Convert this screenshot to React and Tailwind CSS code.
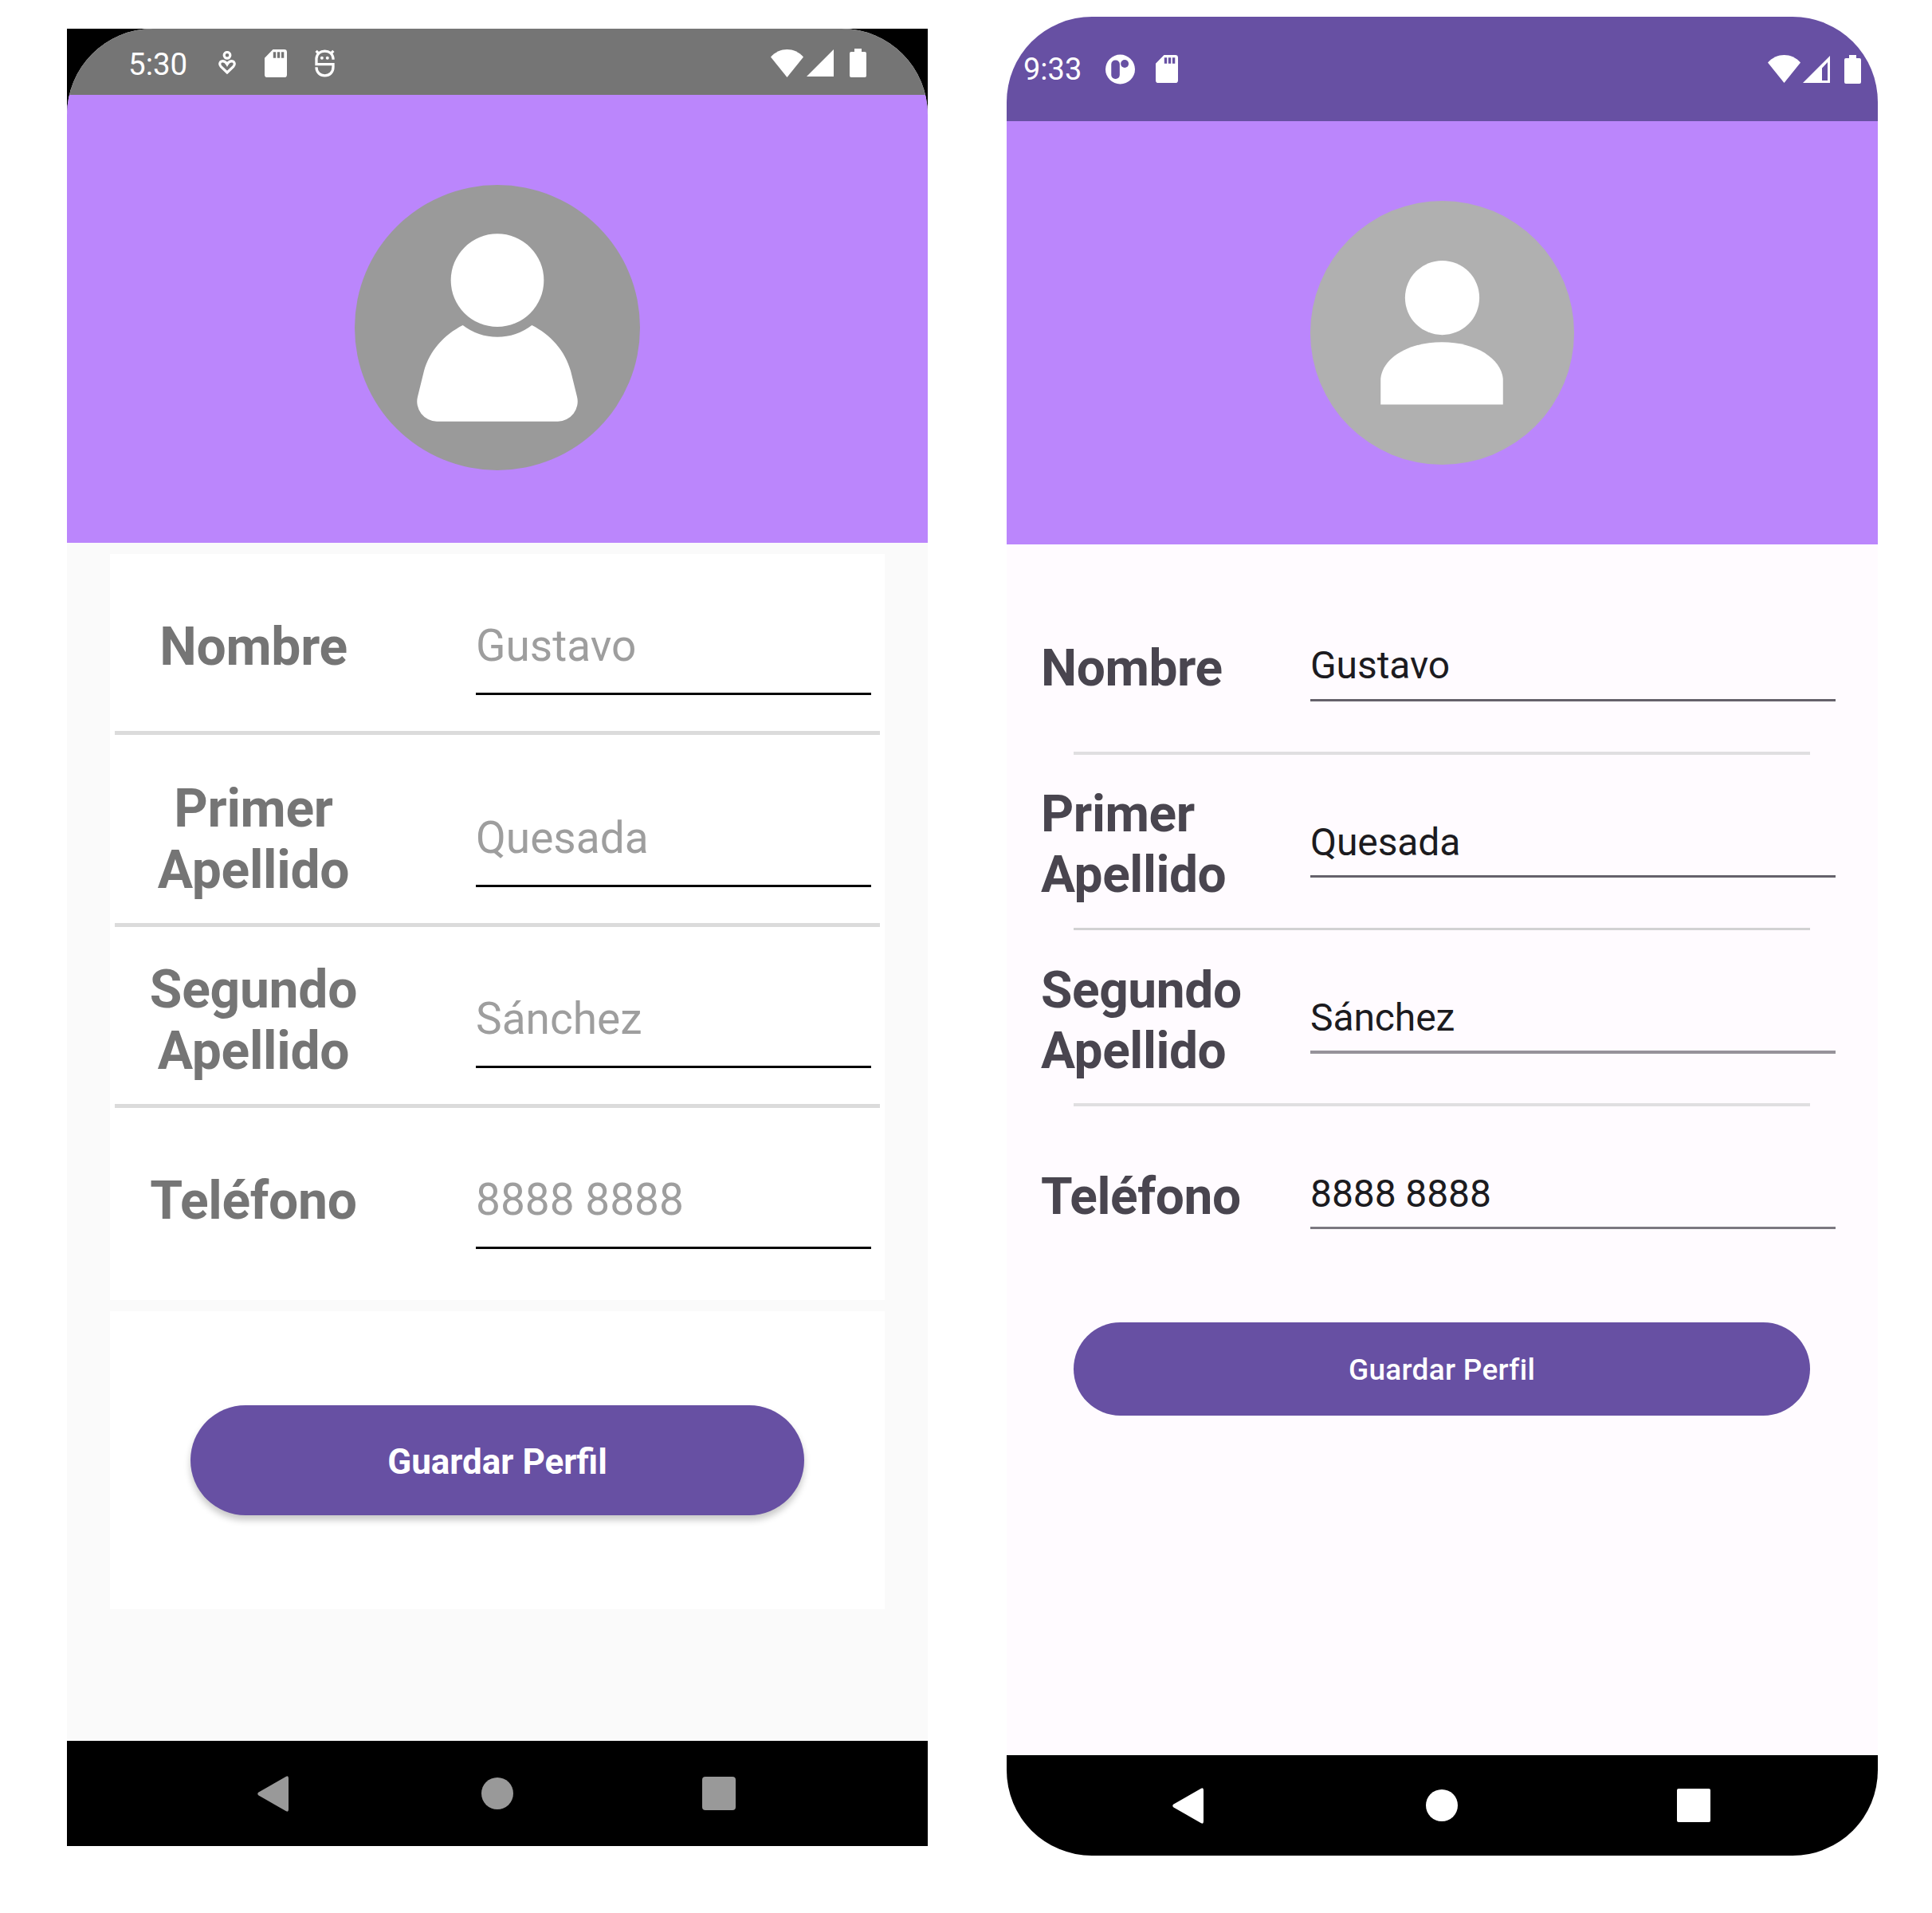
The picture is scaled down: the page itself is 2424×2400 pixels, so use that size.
import React from "react";

const SdCard = ({ className }) => (
  <svg viewBox="0 0 83 104" preserveAspectRatio="none" className={className}>
    <path
      fill="#fff"
      fillRule="evenodd"
      d="M31 0H73Q83 0 83 10V94Q83 104 73 104H10Q0 104 0 94V32ZM32 10V32H42V10ZM47 10V32H57V10ZM62 10V32H72V10Z"
    />
  </svg>
);

const Wifi = ({ className }) => (
  <svg viewBox="0 0 125 104" preserveAspectRatio="none" className={className}>
    <path fill="#fff" d="M0 28C35 -9 90 -9 125 28L62.5 104Z" />
  </svg>
);

const Battery = ({ className }) => (
  <svg viewBox="0 0 63 107" preserveAspectRatio="none" className={className}>
    <path fill="#fff" d="M18 0H45V12H57Q63 12 63 18V101Q63 107 57 107H6Q0 107 0 101V18Q0 12 6 12H18Z" />
  </svg>
);

const Heart = () => (
  <svg viewBox="0 0 66 90" className="ml-[37px] h-[30px] w-[22px]">
    <g fill="none" stroke="#fff" strokeWidth="9.5">
      <circle cx="33" cy="16" r="11.5" />
      <path d="M33 81L10 59C0 47 8 38 17 38Q27 39 33 50Q39 39 49 38C58 38 66 47 56 59Z" />
    </g>
  </svg>
);

const Droid = () => (
  <svg viewBox="0 0 76 105" className="ml-[35px] h-[35px] w-[25px]">
    <g fill="none" stroke="#fff" strokeWidth="10">
      <path d="M70 38V34C68 16 55 6 38 6S8 16 6 34V56H70V66C70 87 56 99 38 99S6 87 6 67" />
      <path d="M5 5L17 17M71 5L59 17" />
    </g>
    <circle cx="27" cy="32" r="6" fill="#fff" />
    <circle cx="48" cy="32" r="6" fill="#fff" />
  </svg>
);

const Nav = ({ className, fill, gapA, gapB, radius }) => (
  <div className={className}>
    <svg viewBox="0 0 39 45" className="h-[45px] w-[39px]" fill={fill}>
      <path d="M36 .8Q39 -.8 39 3V42Q39 45.8 36 44.2L1.5 24.5Q-1 22.5 1.5 20.5Z" />
    </svg>
    <div className={gapA} />
    <svg viewBox="0 0 40 40" className="h-[40px] w-[40px]" fill={fill}>
      <circle cx="20" cy="20" r="20" />
    </svg>
    <div className={gapB} />
    <svg viewBox="0 0 42 42" className="h-[42px] w-[42px]" fill={fill}>
      <rect width="42" height="42" rx={radius} />
    </svg>
  </div>
);

const leftRows = [
  { label: ["Nombre"], value: "Gustavo", row: "h-[222px] pt-[78px]", input: "mt-[5px]" },
  { label: ["Primer", "Apellido"], value: "Quesada", row: "h-[236px] pt-[54px]", input: "mt-[43px]" },
  { label: ["Segundo", "Apellido"], value: "Sánchez", row: "h-[222px] pt-[40px]", input: "mt-[43px]" },
  { label: ["Teléfono"], value: "8888 8888", row: "h-[241px] pt-[78px]", input: "mt-[5px]" },
];

const rightRows = [
  { label: ["Nombre"], value: "Gustavo", row: "h-[260px] pt-[118px]", input: "mt-[6px] h-[73px] border-b-3 border-[#65616b]", rule: "h-[4px] bg-[#e0dfe1]" },
  { label: ["Primer", "Apellido"], value: "Quesada", row: "h-[217px] pt-[37px]", input: "mt-[45px] h-[72px] border-b-3 border-[#65616b]", rule: "h-[3px] bg-[#d2d1d3]" },
  { label: ["Segundo", "Apellido"], value: "Sánchez", row: "h-[217px] pt-[38px]", input: "mt-[44px] h-[73px] border-b-4 border-[#96929a]", rule: "h-[4px] bg-[#e0dfe1]" },
  { label: ["Teléfono"], value: "8888 8888", row: "h-[271px] pt-[76px]", input: "mt-[6px] h-[72px] border-b-3 border-[#7b7780]", rule: null },
];

const LeftPhone = () => (
  <section className="mt-[36px] ml-[84px] h-[2280px] w-[1080px] shrink-0 bg-black">
    <div className="flex h-[2148px] flex-col overflow-hidden rounded-t-[108px] bg-[#fafafa]">
      <div className="flex h-[83px] shrink-0 items-center bg-[#757575] pt-[3px] pl-[77px] text-white">
        <span className="mt-[3px] w-[76px] text-[38.5px] leading-[45px]">5:30</span>
        <Heart />
        <SdCard className="ml-[36px] h-[35px] w-[28px]" />
        <Droid />
        <Wifi className="ml-[547px] h-[35px] w-[41px]" />
        <svg viewBox="0 0 34 34" className="ml-[4px] h-[34px] w-[34px]">
          <path fill="#fff" d="M34 0V34H0Z" />
        </svg>
        <Battery className="ml-[20px] h-[36px] w-[21px]" />
      </div>
      <div className="flex h-[562px] shrink-0 justify-center bg-[#bb86fc] pt-[113px]">
        <svg viewBox="45 65 1074 1074" className="h-[358px] w-[358px]">
          <circle cx="582" cy="602" r="537" fill="#9a9a9a" />
          <circle cx="582" cy="424" r="175" fill="#fff" />
          <path
            fill="#fff"
            d="M452 593A212 212 0 0 0 712 593C783 629 837 690 858 765L882 862A75 75 0 0 1 810 955H354A75 75 0 0 1 282 862L306 765C327 690 381 629 452 593Z"
          />
        </svg>
      </div>
      <div className="mx-[54px] mt-[14px] h-[936px] shrink-0 bg-white px-[6px]">
        {leftRows.map((r, i) => (
          <React.Fragment key={r.value}>
            {i > 0 && <div className="h-[5px] bg-[#dbdbdb]" />}
            <div className={`flex items-start ${r.row}`}>
              <div className="w-[348px] text-center text-[66px] leading-[77px] font-bold tracking-[-0.3px] text-[#757575]">
                {r.label.map((t) => (
                  <div key={t}>{t}</div>
                ))}
              </div>
              <div className={`ml-[105px] h-[94px] w-[496px] border-b-3 border-[#050505] text-[55px] leading-[64px] text-[#9e9e9e] ${r.input}`}>
                {r.value}
              </div>
            </div>
          </React.Fragment>
        ))}
      </div>
      <div className="mx-[54px] mt-[14px] flex h-[374px] shrink-0 items-center justify-center bg-white">
        <button className="h-[138px] w-[770px] rounded-full bg-[#6750a3] pt-[3px] text-[44px] leading-[52px] font-bold text-white shadow-[0_6px_8px_rgba(0,0,0,0.22)]">
          Guardar Perfil
        </button>
      </div>
    </div>
    <Nav className="flex h-[132px] items-center pl-[239px]" fill="#999" gapA="w-[242px]" gapB="w-[237px]" radius="4" />
  </section>
);

const RightPhone = () => (
  <section className="mt-[21px] ml-[99px] flex h-[2307px] w-[1093px] shrink-0 flex-col overflow-hidden rounded-[107px] bg-[#fffbff]">
    <div className="flex h-[131px] shrink-0 items-center bg-[#6750a3] pl-[21px] text-white">
      <span className="mt-[1px] w-[76px] text-[38px] leading-[45px]">9:33</span>
      <svg viewBox="0 0 112 114" className="ml-[27px] h-[38px] w-[37px]">
        <circle cx="56" cy="57" r="56" fill="#fff" />
        <rect x="22" y="22" width="32" height="71" rx="15" fill="#6750a3" />
        <circle cx="73" cy="36" r="15" fill="#6750a3" />
      </svg>
      <SdCard className="ml-[26px] h-[35px] w-[28px]" />
      <Wifi className="ml-[740px] h-[35px] w-[41px]" />
      <svg viewBox="0 0 34 34" className="ml-[3px] h-[34px] w-[34px]">
        <path fill="#fff" fillRule="evenodd" d="M34 0V34H0ZM31 8L24 15.500V31H31Z" />
      </svg>
      <Battery className="ml-[18px] h-[36px] w-[21px]" />
    </div>
    <div className="flex h-[531px] shrink-0 justify-center bg-[#bb86fc] pt-[100px]">
      <svg viewBox="74 65 994 994" className="h-[331px] w-[331px]">
        <circle cx="571" cy="562" r="497" fill="#b0b0b0" />
        <circle cx="571" cy="430" r="140" fill="#fff" />
        <path fill="#fff" d="M339 832V735C346 660 440 597 570 597S793 660 800 735V832Z" />
      </svg>
    </div>
    <div className="h-[1519px] shrink-0">
      {rightRows.map((r) => (
        <React.Fragment key={r.value}>
          <div className={`flex items-start pl-[43px] ${r.row}`}>
            <div className="w-[338px] text-[64px] leading-[75.5px] font-bold tracking-[-0.4px] text-[#49454f]">
              {r.label.map((t) => (
                <div key={t}>{t}</div>
              ))}
            </div>
            <div className={`w-[659px] text-[48px] leading-[56px] tracking-[-0.1px] text-[#1c1b1f] ${r.input}`}>{r.value}</div>
          </div>
          {r.rule && <div className={`ml-[84px] w-[924px] ${r.rule}`} />}
        </React.Fragment>
      ))}
      <button className="ml-[84px] block h-[117px] w-[924px] rounded-full bg-[#6750a3] pt-[2px] text-[37px] leading-[44px] font-medium tracking-[0.3px] text-white">
        Guardar Perfil
      </button>
    </div>
    <Nav className="flex h-[126px] shrink-0 items-center bg-black pl-[208px]" fill="#fff" gapA="w-[279px]" gapB="w-[275px]" radius="2" />
  </section>
);

export default function App() {
  return (
    <main className="flex h-[2400px] w-[2424px] items-start overflow-hidden bg-white font-['Roboto',sans-serif]">
      <LeftPhone />
      <RightPhone />
    </main>
  );
}
